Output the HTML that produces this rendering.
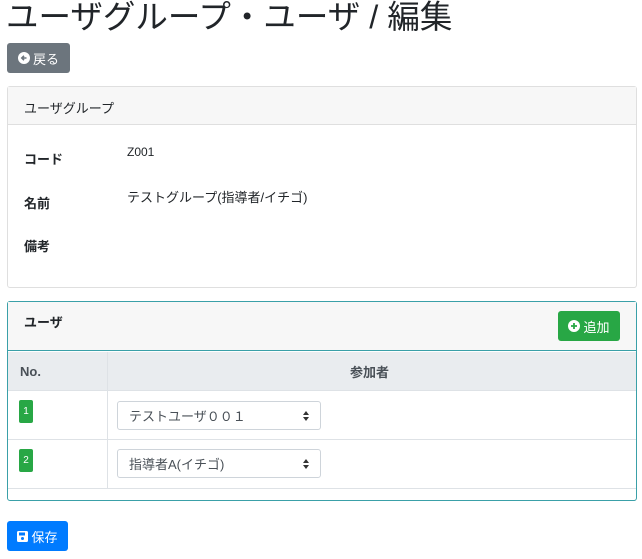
<!DOCTYPE html><html><head><meta charset="utf-8"><style>
*{box-sizing:border-box;margin:0;padding:0}
body{width:642px;height:559px;background:#fff;font-family:"Liberation Sans","Noto Sans CJK JP",sans-serif;color:#212529;position:relative;overflow:hidden;font-size:13px}
.a{position:absolute}
.btn{position:absolute;color:#fff;border-radius:3px;font-size:13px;display:flex;align-items:center;justify-content:center;gap:3px}
.sel{position:absolute;left:117px;width:204px;height:29px;border:1px solid #ced4da;border-radius:3px;padding-left:11px;display:flex;align-items:center;font-size:13px;color:#495057}
.sel:after{content:"";position:absolute;right:11px;top:9px;border:3px solid transparent;border-bottom:4px solid #333;border-top:0;width:0;height:0}
.sel:before{content:"";position:absolute;right:11px;top:15px;border:3px solid transparent;border-top:4px solid #333;border-bottom:0}
.badge{position:absolute;left:19px;width:14px;height:23px;background:#28a745;color:#fff;border-radius:2px;font-size:10px;line-height:23px;text-align:center}
</style></head><body>
<div class="a" style="left:6px;top:-3px;font-size:32.5px;line-height:40px;color:#212529">ユーザグループ・ユーザ / 編集</div>
<div class="btn" style="left:7px;top:43px;width:63px;height:30px;background:#6c757d"><svg width="12" height="12" viewBox="0 0 12 12"><circle cx="6" cy="6" r="6" fill="#fff"/><path d="M8.5 6H4M6 3.8L3.8 6 6 8.2" stroke="#6c757d" stroke-width="1.6" fill="none"/></svg>戻る</div>
<div class="a" style="left:7px;top:86px;width:630px;height:202px;border:1px solid #dfdfdf;border-radius:3px"></div>
<div class="a" style="left:8px;top:87px;width:628px;height:38px;background:#f7f7f7;border-bottom:1px solid #dfdfdf;padding:11px 0 0 16px;font-size:13px">ユーザグループ</div>
<div class="a" style="left:24px;top:149px;font-weight:bold">コード</div>
<div class="a" style="left:127px;top:145px;font-size:12px">Z001</div>
<div class="a" style="left:24px;top:193px;font-weight:bold">名前</div>
<div class="a" style="left:127px;top:187px">テストグループ(指導者/イチゴ)</div>
<div class="a" style="left:24px;top:236px;font-weight:bold">備考</div>
<div class="a" style="left:7px;top:301px;width:630px;height:200px;border:1px solid #3aa0a8;border-radius:3px"></div>
<div class="a" style="left:8px;top:302px;width:628px;height:49px;background:#f7f7f7;border-bottom:1px solid #3aa0a8"></div>
<div class="a" style="left:24px;top:312px;font-weight:bold">ユーザ</div>
<div class="btn" style="left:558px;top:311px;width:62px;height:30px;background:#28a745"><svg width="12" height="12" viewBox="0 0 12 12"><circle cx="6" cy="6" r="6" fill="#fff"/><path d="M6 3v6M3 6h6" stroke="#28a745" stroke-width="1.8"/></svg>追加</div>
<div class="a" style="left:8px;top:352px;width:628px;height:38px;background:#e9ecef"></div>
<div class="a" style="left:107px;top:352px;width:1px;height:136px;background:#dee2e6"></div>
<div class="a" style="left:8px;top:390px;width:628px;height:1px;background:#dee2e6"></div>
<div class="a" style="left:8px;top:439px;width:628px;height:1px;background:#dee2e6"></div>
<div class="a" style="left:8px;top:488px;width:628px;height:1px;background:#dee2e6"></div>
<div class="a" style="left:20px;top:364px;font-weight:bold;color:#495057">No.</div>
<div class="a" style="left:350px;top:362px;font-weight:bold;color:#495057">参加者</div>
<div class="badge" style="top:400px">1</div>
<div class="sel" style="top:401px">テストユーザ００１</div>
<div class="badge" style="top:449px">2</div>
<div class="sel" style="top:449px">指導者A(イチゴ)</div>
<div class="btn" style="left:7px;top:521px;width:61px;height:30px;background:#007bff"><svg width="11" height="11" viewBox="0 0 11 11"><rect width="11" height="11" rx="1.5" fill="#fff"/><rect x="2" y="1.5" width="6" height="3" fill="#007bff"/><circle cx="5.5" cy="7.5" r="1.5" fill="#007bff"/></svg>保存</div>
</body></html>
